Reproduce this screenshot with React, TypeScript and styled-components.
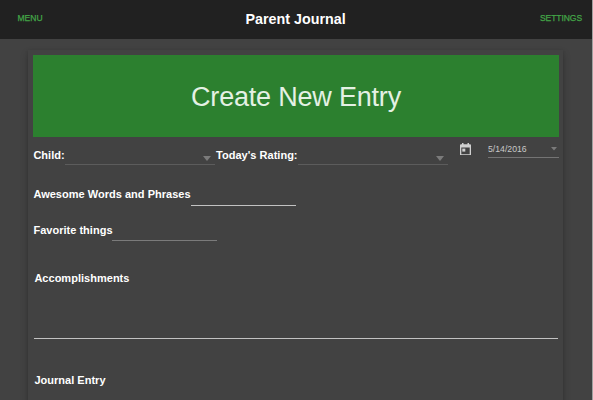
import React from "react";
import styled, { createGlobalStyle } from "styled-components";

const Global = createGlobalStyle`
  * { box-sizing: border-box; }
  html, body { margin: 0; background: #424242; overflow: hidden; }
  body { font-family: "Liberation Sans", Arial, sans-serif; color: #fff; }
`;

const Page = styled.div`
  width: 593px;
  height: 400px;
  overflow: hidden;
  background: #424242;
  border-right: 1px solid #a0a0a0;
`;

const TopBar = styled.header`
  display: flex;
  height: 39px;
  padding: 0 10px 0 17.5px;
  background: #212121;
`;

const NavLink = styled.a<{ $spacing?: number }>`
  font-size: 8.5px;
  line-height: 37px;
  letter-spacing: ${(p) => p.$spacing ?? 0}px;
  color: #43a547;
  -webkit-text-stroke: 0.25px #43a547;
  white-space: nowrap;

  &:last-child { margin-left: auto; }
`;

const AppTitle = styled.h1`
  margin: 0 0 0 203px;
  font-size: 14.3px;
  line-height: 38px;
  font-weight: bold;
  white-space: nowrap;
`;

const Card = styled.main`
  width: 535px;
  height: 420px;
  margin: 11px 0 0 28px;
  padding: 5px 4px 0 5px;
  box-shadow: 0 4px 8px rgba(0, 0, 0, 0.2), 0 1px 3px rgba(0, 0, 0, 0.15);
`;

const Banner = styled.h2`
  height: 82px;
  margin: 0;
  background: #2c802f;
  color: #e4f1e4;
  font-size: 27px;
  line-height: 84px;
  font-weight: 300;
  letter-spacing: -0.2px;
  text-align: center;
  white-space: nowrap;
`;

const Row = styled.div<{ $height: number }>`
  display: flex;
  height: ${(p) => p.$height}px;
`;

const Label = styled.label<{ $width?: number; $top: number; $left?: number }>`
  display: block;
  flex: none;
  width: ${(p) => (p.$width ? p.$width + "px" : "auto")};
  padding: ${(p) => p.$top}px 0 0 ${(p) => p.$left ?? 0.4}px;
  font-size: 11px;
  line-height: 14px;
  font-weight: bold;
  letter-spacing: 0.02px;
  white-space: nowrap;
`;

const Select = styled.div`
  display: flex;
  justify-content: flex-end;
  flex: none;
  width: 150px;
  height: 28px;
  padding: 19px 4px 0 0;
  border-bottom: 1px solid #5c5c5c;
`;

const Arrow = styled.svg`
  display: block;
  fill: #7b7b7b;
`;

const CalendarIcon = styled.svg`
  display: block;
  flex: none;
  margin: 5.5px 0 0 12px;
`;

const DateField = styled.div`
  display: flex;
  justify-content: space-between;
  flex: none;
  width: 71px;
  height: 21px;
  margin-left: 17px;
  padding: 7px 2px 0 0;
  border-bottom: 1px solid #747474;
  color: #c8c8c8;
  font-size: 8.7px;
  line-height: 11px;

  ${Arrow} { margin-top: 3px; }
`;

const TextInput = styled.div<{ $height: number; $color: string }>`
  width: 105px;
  height: ${(p) => p.$height}px;
  border-bottom: 1px solid ${(p) => p.$color};
`;

const TextArea = styled.div`
  width: 523.5px;
  height: 54px;
  margin-left: 1px;
  border-bottom: 1px solid #c2c2c2;
`;

const DropArrow = ({ small = false }: { small?: boolean }) => (
  <Arrow width={small ? 6 : 8} height={small ? 3.5 : 5} viewBox="0 0 8 5" preserveAspectRatio="none">
    <path d="M0 0h8L4 5z" />
  </Arrow>
);

export default function App() {
  return (
    <>
      <Global />
      <Page>
        <TopBar>
          <NavLink>MENU</NavLink>
          <AppTitle>Parent Journal</AppTitle>
          <NavLink $spacing={-0.05}>SETTINGS</NavLink>
        </TopBar>
        <Card>
          <Banner>Create New Entry</Banner>
          <Row $height={40}>
            <Label $width={32} $top={11}>Child:</Label>
            <Select><DropArrow /></Select>
            <Label $width={83} $top={11} $left={1}>Today's Rating:</Label>
            <Select><DropArrow /></Select>
            <CalendarIcon width="11" height="12.5" viewBox="0 0 11 12.5">
              <path
                fill="#d0d0d0"
                fillRule="evenodd"
                d="M1 1.2h1V0h1.5v1.2h4V0H9v1.2h1a1 1 0 0 1 1 1v9.3a1 1 0 0 1-1 1H1a1 1 0 0 1-1-1V2.2a1 1 0 0 1 1-1zM1.3 4.5v6.7h8.4V4.5z"
              />
              <path fill="#d0d0d0" d="M2.3 5.6h3v3h-3z" />
            </CalendarIcon>
            <DateField>
              5/14/2016
              <DropArrow small />
            </DateField>
          </Row>
          <Row $height={35}>
            <Label $width={158} $top={10}>Awesome Words and Phrases</Label>
            <TextInput $height={29} $color="#c2c2c2" />
          </Row>
          <Row $height={58}>
            <Label $width={79} $top={11}>Favorite things</Label>
            <TextInput $height={29} $color="#7b7b7b" />
          </Row>
          <Label $top={1} $left={1.4}>Accomplishments</Label>
          <TextArea />
          <Label $top={34} $left={1.4}>Journal Entry</Label>
        </Card>
      </Page>
    </>
  );
}
